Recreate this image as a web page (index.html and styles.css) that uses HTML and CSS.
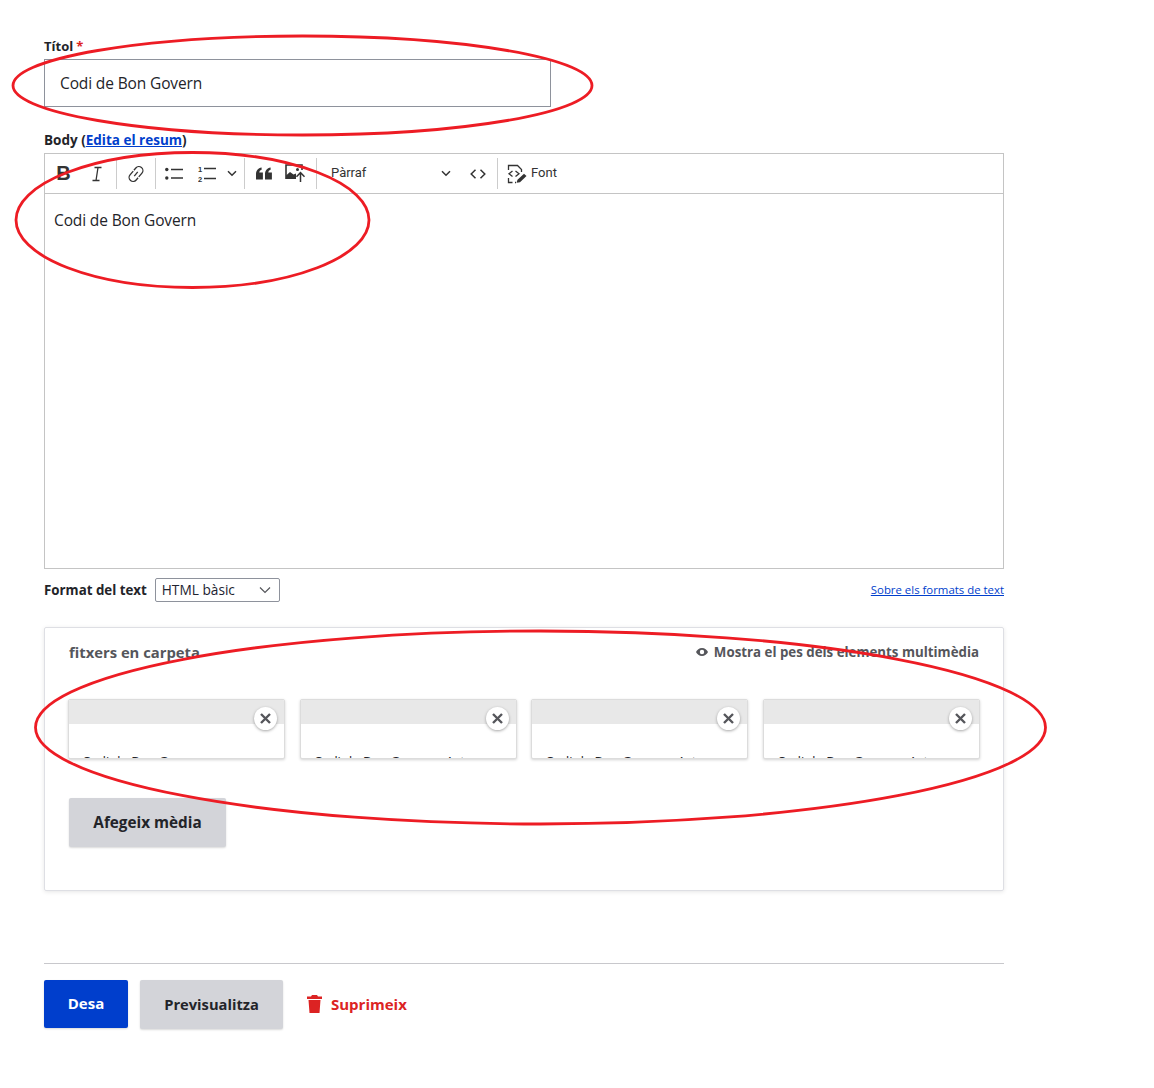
FILE: index.html
```html
<!DOCTYPE html>
<html lang="ca">
<head>
<meta charset="utf-8">
<title>Codi de Bon Govern</title>
<link rel="stylesheet" href="styles.css">
</head>
<body>
<form class="page">
  <div class="field-title">
    <label class="label">Títol<span class="req">*</span></label>
    <div class="text-input">Codi de Bon Govern</div>
  </div>

  <div class="field-body">
    <div class="label label-body">Body (<a class="label-link" href="#">Edita el resum</a>)</div>
    <div class="editor">
      <div class="toolbar">
        <span class="tb tb-b">B</span>
        <span class="tb tb-i"><svg width="14" height="16" viewBox="0 0 14 16"><path d="M4.500 1.500h7M2.500 14.500h7M8 1.500 6 14.500" fill="none" stroke="#333" stroke-width="1.300"/></svg></span>
        <span class="sep sep-a"></span>
        <span class="tb tb-link"><svg width="18" height="18" viewBox="0 0 18 18"><g fill="none" stroke="#333" stroke-width="1.300" transform="rotate(-50 9 9)"><path d="M9.500 5H4.500a4 4 0 0 0 0 8H7.500"/><path d="M8.500 13H13.500a4 4 0 0 0 0-8H10.500"/><path d="M6.300 9H11.700"/></g></svg></span>
        <span class="sep sep-b"></span>
        <span class="tb tb-ul"><svg width="18" height="14" viewBox="0 0 18 14"><circle cx="1.800" cy="2.500" r="1.700" fill="#333"/><circle cx="1.800" cy="11" r="1.700" fill="#333"/><path d="M6 2.500h12M6 11h12" stroke="#333" stroke-width="1.400"/></svg></span>
        <span class="tb tb-ol"><svg width="18" height="18" viewBox="0 0 18 18"><text x="0" y="6.500" class="ol-num">1</text><text x="0" y="16.500" class="ol-num">2</text><path d="M6 3.500h12M6 13.500h12" stroke="#333" stroke-width="1.400"/></svg></span>
        <span class="tb tb-chev"><svg width="10" height="7" viewBox="0 0 10 7"><path d="M1 1.200 5 5.200l4-4" fill="none" stroke="#333" stroke-width="1.500"/></svg></span>
        <span class="sep sep-c"></span>
        <span class="tb tb-quote"><svg width="16" height="13" viewBox="0 0 16 13"><path d="M0 12.500V7.200C0 3.600 2 1 5.600.5v2.300C4 3.200 3.400 4.400 3.300 5.600h3.600v6.900zM9 12.500V7.200C9 3.600 11 1 14.600.5v2.300c-1.600.4-2.200 1.600-2.300 2.800h3.600v6.900z" fill="#333"/></svg></span>
        <span class="tb tb-img"><svg width="21" height="19" viewBox="0 0 21 19"><path d="M1 15V1h16v5" fill="none" stroke="#333" stroke-width="1.600"/><path d="M1 15v-3.500l4-3.500 3.500 2.500 2.500-1v5.500z" fill="#333"/><circle cx="12.500" cy="5.500" r="1.500" fill="#333"/><path d="M15.500 18V9M11.500 12.800l4-4.300 4 4.300" fill="none" stroke="#333" stroke-width="1.500"/></svg></span>
        <span class="sep sep-d"></span>
        <span class="tb-select"><span class="tb-text">Pàrraf</span><svg width="10" height="7" viewBox="0 0 10 7"><path d="M1 1.200 5 5.200l4-4" fill="none" stroke="#333" stroke-width="1.500"/></svg></span>
        <span class="tb tb-code"><svg width="16" height="10" viewBox="0 0 16 10"><path d="M5.500.8 1.200 5l4.300 4.200M10.500.8 14.800 5l-4.300 4.200" fill="none" stroke="#333" stroke-width="1.500"/></svg></span>
        <span class="sep sep-e"></span>
        <span class="tb-source"><svg width="20" height="20" viewBox="0 0 20 20"><g fill="none" stroke="#333" stroke-width="1.300"><path d="M1.500 6V1.500h9l4 4V8M1.500 14v4.500h4M8 18.500h1"/><path d="M5.500 7 2 9.800l3.500 2.800M8.500 7 12 9.800l-3.500 2.800"/></g><path d="m9.500 18.800 1-3 6.500-6 2.500 2.200-6.500 6.300z" fill="#333"/></svg><span class="tb-text">Font</span></span>
      </div>
      <div class="editor-content">Codi de Bon Govern</div>
    </div>
  </div>

  <div class="format-row">
    <label class="format-label">Format del text</label>
    <div class="format-select">HTML bàsic<svg width="12" height="8" viewBox="0 0 12 8"><path d="M1 1.500 6 6.500l5-5" fill="none" stroke="#55565b" stroke-width="1.200"/></svg></div>
    <a class="format-link" href="#">Sobre els formats de text</a>
  </div>

  <section class="media">
    <header class="media-head">
      <h2 class="media-title">fitxers en carpeta</h2>
      <span class="media-toggle"><svg width="12" height="8" viewBox="0 0 12 8"><path d="M6 0C3.200 0 1 2 0 4c1 2 3.200 4 6 4s5-2 6-4c-1-2-3.200-4-6-4zm0 6.200A2.200 2.200 0 1 1 6 1.800a2.200 2.200 0 0 1 0 4.400z" fill="#55565b"/></svg>Mostra el pes dels elements multimèdia</span>
    </header>
    <div class="media-grid">
      <article class="media-card"><div class="card-bar"></div><button type="button" class="card-x"><svg width="11" height="11" viewBox="0 0 11 11"><path d="M1 1l9 9M10 1 1 10" stroke="#55565b" stroke-width="2.400"/></svg></button><div class="card-name">Codi de Bon Gov</div></article>
      <article class="media-card"><div class="card-bar"></div><button type="button" class="card-x"><svg width="11" height="11" viewBox="0 0 11 11"><path d="M1 1l9 9M10 1 1 10" stroke="#55565b" stroke-width="2.400"/></svg></button><div class="card-name">Codi de Bon Govern - Act</div></article>
      <article class="media-card"><div class="card-bar"></div><button type="button" class="card-x"><svg width="11" height="11" viewBox="0 0 11 11"><path d="M1 1l9 9M10 1 1 10" stroke="#55565b" stroke-width="2.400"/></svg></button><div class="card-name">Codi de Bon Govern - Act</div></article>
      <article class="media-card"><div class="card-bar"></div><button type="button" class="card-x"><svg width="11" height="11" viewBox="0 0 11 11"><path d="M1 1l9 9M10 1 1 10" stroke="#55565b" stroke-width="2.400"/></svg></button><div class="card-name">Codi de Bon Govern - Act</div></article>
    </div>
    <button type="button" class="btn btn-add">Afegeix mèdia</button>
  </section>

  <div class="actions">
    <button type="button" class="btn btn-primary">Desa</button>
    <button type="button" class="btn btn-preview">Previsualitza</button>
    <a class="delete" href="#"><svg width="15" height="18" viewBox="0 0 15 18"><path d="M5 0h5l1 1.500h4V4H0V1.500h4zM1.500 5h12l-1 13h-10z" fill="#dc2323"/></svg>Suprimeix</a>
  </div>
</form>

<svg class="marks" width="1154" height="1088" viewBox="0 0 1154 1088" aria-hidden="true">
  <ellipse cx="302.500" cy="85.500" rx="289.500" ry="49.500"/>
  <ellipse cx="192.500" cy="220" rx="176.500" ry="67.500"/>
  <ellipse cx="540.500" cy="727.500" rx="505" ry="96.500"/>
</svg>
</body>
</html>
```

FILE: styles.css
```css
* { box-sizing: border-box; }
html, body { margin: 0; padding: 0; background: #fff; }
body { position: relative; width: 1154px; height: 1088px; overflow: hidden; font-family: "Open Sans", "Noto Sans", sans-serif; color: #232429; }
a { color: #003ecc; }
.page { width: 960px; margin-left: 44px; padding-top: 37px; display: flex; flex-direction: column; }
.label { display: block; font-size: 13px; line-height: 18px; font-weight: 700; color: #232429; }
.label-body { font-size: 13.500px; }
.req { color: #dc2323; margin-left: 3px; }
.label-link { color: #003ecc; }
.field-title { width: 507px; display: flex; flex-direction: column; gap: 4px; }
.text-input { height: 48px; border: 1px solid #8e929c; font-size: 15.500px; letter-spacing: -0.13px; line-height: 46px; padding-left: 15px; color: #232429; }
.field-body { margin-top: 24px; display: flex; flex-direction: column; gap: 4px; }
.editor { border: 1px solid #c4c4c4; height: 416px; display: flex; flex-direction: column; }
.toolbar { height: 40px; flex: none; border-bottom: 1px solid #c4c4c4; display: flex; align-items: center; padding-left: 2px; }
.tb { display: flex; align-items: center; justify-content: center; flex: none; height: 30px; color: #333; }
.tb-b { width: 33px; font-family: "Liberation Sans", sans-serif; font-weight: 700; font-size: 20px; }
.tb-i { width: 33px; }
.sep { width: 1px; height: 31px; background: #ccc; flex: none; }
.sep-a { margin-left: 3px; }
.tb-link { width: 38px; }
.tb-ul { width: 36px; }
.tb-ol { width: 30px; }
.tb-chev { width: 20px; }
.sep-c { margin-left: 2px; }
.tb-quote { width: 38px; }
.tb-img { width: 24px; margin-right: 9px; }
.ol-num { font-family: "Liberation Sans", sans-serif; font-size: 7.500px; font-weight: 700; fill: #333; }
.tb-select { width: 135px; padding: 0 1px 0 14px; display: flex; align-items: center; justify-content: space-between; flex: none; }
.tb-text { font-family: Roboto, "Liberation Sans", sans-serif; font-size: 13px; color: #333; padding-bottom: 2px; }
.tb-code { width: 36px; margin-left: 8px; margin-right: 1px; }
.tb-source { display: flex; align-items: center; gap: 4px; padding-left: 9px; }
.editor-content { padding: 16px 9px; font-size: 15.500px; letter-spacing: -0.13px; line-height: 20px; color: #232429; }
.format-row { margin-top: 9px; height: 24px; display: flex; align-items: center; }
.format-label { font-size: 13.300px; font-weight: 700; margin-right: 8px; color: #232429; }
.format-select { width: 125px; height: 24px; border: 1px solid #8e929c; border-radius: 2px; padding: 0 8px 0 6px; font-size: 13.700px; line-height: 22px; color: #222330; display: flex; align-items: center; justify-content: space-between; }
.format-link { margin-left: auto; padding-bottom: 2px; font-size: 11.400px; }
.media { margin-top: 25px; height: 264px; border: 1px solid #dedfe4; border-radius: 2px; box-shadow: 0 1px 4px rgba(0,0,0,.1); padding: 14px 24px 0; }
.media-head { display: flex; justify-content: space-between; align-items: center; height: 20px; }
.media-title { margin: 0; font-size: 14.800px; font-weight: 700; color: #55565b; }
.media-toggle { display: flex; align-items: center; gap: 6px; font-size: 13.300px; font-weight: 700; color: #55565b; }
.media-grid { margin: 37px 0 0 -1px; width: 912px; display: flex; justify-content: space-between; }
.media-card { position: relative; width: 217px; height: 60px; overflow: hidden; background: #fff; border: 1px solid #dcdcdc; border-radius: 2px; box-shadow: 0 1px 3px rgba(0,0,0,.18); }
.card-bar { height: 24px; background: #e8e8e8; }
.card-name { padding: 27px 0 0 13px; font-size: 13px; line-height: 20px; white-space: nowrap; color: #232429; }
.card-x { position: absolute; top: 7px; right: 7px; width: 23px; height: 23px; padding: 0; border: 0; border-radius: 50%; background: #fff; box-shadow: 0 1px 3px rgba(0,0,0,.35); display: flex; align-items: center; justify-content: center; }
.btn { border: 0; border-radius: 2px; font-family: inherit; font-size: 15px; font-weight: 700; box-shadow: 0 1px 2px rgba(0,0,0,.15); padding: 0 0 2px; }
.btn-add { display: block; margin-top: 39px; width: 157px; height: 49px; font-size: 15.300px; background: #d3d4d9; color: #232429; }
.actions { margin-top: 72px; border-top: 1px solid #c8c8cc; padding-top: 16px; display: flex; align-items: flex-start; }
.btn-primary { width: 84px; height: 48px; background: #003ecc; color: #fff; }
.btn-preview { width: 143px; height: 49px; margin-left: 12px; font-size: 14.700px; background: #d3d4d9; color: #232429; }
.delete { display: flex; align-items: center; gap: 9px; height: 48px; margin-left: 24px; padding-bottom: 1px; font-size: 15px; font-weight: 700; color: #dc2323; text-decoration: none; }
.marks { position: absolute; left: 0; top: 0; pointer-events: none; }
.marks ellipse { fill: none; stroke: #ed1c24; stroke-width: 2.800; }
```
